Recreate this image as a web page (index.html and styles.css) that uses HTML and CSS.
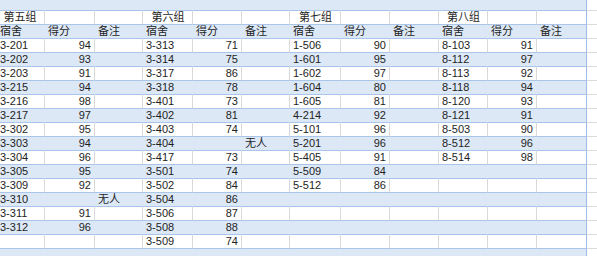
FILE: index.html
```html
<!DOCTYPE html>
<html lang="zh">
<head>
    <meta charset="UTF-8">
    <title>宿舍得分</title>
    <link rel="stylesheet" href="styles.css">
</head>
<body>
    <table class="sheet">
        <colgroup>
            <col style="width:45px"><col style="width:50px"><col style="width:48px">
            <col style="width:50px"><col style="width:49px"><col style="width:48px">
            <col style="width:51px"><col style="width:49px"><col style="width:49px">
            <col style="width:49px"><col style="width:49px"><col style="width:50px">
            <col style="width:10px">
        </colgroup>
        <tr class="band top"><td></td><td></td><td></td><td></td><td></td><td></td><td></td><td></td><td></td><td></td><td></td><td class="edge"></td><td class="out"></td></tr>
        <tr class="head">
            <td class="c">第五组</td><td></td><td></td>
            <td class="c">第六组</td><td></td><td></td>
            <td class="c">第七组</td><td></td><td></td>
            <td class="c">第八组</td><td></td><td class="edge"></td><td class="out"></td>
        </tr>
        <tr class="band">
            <td>宿舍</td><td>得分</td><td>备注</td>
            <td>宿舍</td><td>得分</td><td>备注</td>
            <td>宿舍</td><td>得分</td><td>备注</td>
            <td>宿舍</td><td>得分</td><td class="edge">备注</td><td class="out"></td>
        </tr>
        <tr>
            <td>3-201</td><td class="num">94</td><td></td>
            <td>3-313</td><td class="num">71</td><td></td>
            <td>1-506</td><td class="num">90</td><td></td>
            <td>8-103</td><td class="num">91</td><td class="edge"></td><td class="out"></td>
        </tr>
        <tr class="band">
            <td>3-202</td><td class="num">93</td><td></td>
            <td>3-314</td><td class="num">75</td><td></td>
            <td>1-601</td><td class="num">95</td><td></td>
            <td>8-112</td><td class="num">97</td><td class="edge"></td><td class="out"></td>
        </tr>
        <tr>
            <td>3-203</td><td class="num">91</td><td></td>
            <td>3-317</td><td class="num">86</td><td></td>
            <td>1-602</td><td class="num">97</td><td></td>
            <td>8-113</td><td class="num">92</td><td class="edge"></td><td class="out"></td>
        </tr>
        <tr class="band">
            <td>3-215</td><td class="num">94</td><td></td>
            <td>3-318</td><td class="num">78</td><td></td>
            <td>1-604</td><td class="num">80</td><td></td>
            <td>8-118</td><td class="num">94</td><td class="edge"></td><td class="out"></td>
        </tr>
        <tr>
            <td>3-216</td><td class="num">98</td><td></td>
            <td>3-401</td><td class="num">73</td><td></td>
            <td>1-605</td><td class="num">81</td><td></td>
            <td>8-120</td><td class="num">93</td><td class="edge"></td><td class="out"></td>
        </tr>
        <tr class="band">
            <td>3-217</td><td class="num">97</td><td></td>
            <td>3-402</td><td class="num">81</td><td></td>
            <td>4-214</td><td class="num">92</td><td></td>
            <td>8-121</td><td class="num">91</td><td class="edge"></td><td class="out"></td>
        </tr>
        <tr>
            <td>3-302</td><td class="num">95</td><td></td>
            <td>3-403</td><td class="num">74</td><td></td>
            <td>5-101</td><td class="num">96</td><td></td>
            <td>8-503</td><td class="num">90</td><td class="edge"></td><td class="out"></td>
        </tr>
        <tr class="band">
            <td>3-303</td><td class="num">94</td><td></td>
            <td>3-404</td><td></td><td>无人</td>
            <td>5-201</td><td class="num">96</td><td></td>
            <td>8-512</td><td class="num">96</td><td class="edge"></td><td class="out"></td>
        </tr>
        <tr>
            <td>3-304</td><td class="num">96</td><td></td>
            <td>3-417</td><td class="num">73</td><td></td>
            <td>5-405</td><td class="num">91</td><td></td>
            <td>8-514</td><td class="num">98</td><td class="edge"></td><td class="out"></td>
        </tr>
        <tr class="band">
            <td>3-305</td><td class="num">95</td><td></td>
            <td>3-501</td><td class="num">74</td><td></td>
            <td>5-509</td><td class="num">84</td><td></td>
            <td></td><td></td><td class="edge"></td><td class="out"></td>
        </tr>
        <tr>
            <td>3-309</td><td class="num">92</td><td></td>
            <td>3-502</td><td class="num">84</td><td></td>
            <td>5-512</td><td class="num">86</td><td></td>
            <td></td><td></td><td class="edge"></td><td class="out"></td>
        </tr>
        <tr class="band">
            <td>3-310</td><td></td><td>无人</td>
            <td>3-504</td><td class="num">86</td><td></td>
            <td></td><td></td><td></td>
            <td></td><td></td><td class="edge"></td><td class="out"></td>
        </tr>
        <tr>
            <td>3-311</td><td class="num">91</td><td></td>
            <td>3-506</td><td class="num">87</td><td></td>
            <td></td><td></td><td></td>
            <td></td><td></td><td class="edge"></td><td class="out"></td>
        </tr>
        <tr class="band">
            <td>3-312</td><td class="num">96</td><td></td>
            <td>3-508</td><td class="num">88</td><td></td>
            <td></td><td></td><td></td>
            <td></td><td></td><td class="edge"></td><td class="out"></td>
        </tr>
        <tr>
            <td></td><td></td><td></td>
            <td>3-509</td><td class="num">74</td><td></td>
            <td></td><td></td><td></td>
            <td></td><td></td><td class="edge"></td><td class="out"></td>
        </tr>
        <tr class="band bottom"><td></td><td></td><td></td><td></td><td></td><td></td><td></td><td></td><td></td><td></td><td></td><td class="edge"></td><td class="out"></td></tr>
    </table>
</body>
</html>
```

FILE: styles.css
```css
body {
    margin: 0;
    overflow: hidden;
    background-color: #fff;
    font-family: "Liberation Sans", "Noto Sans CJK SC", sans-serif;
    font-size: 11px;
    color: #1e1e1e;
}
.sheet {
    width: 597px;
    table-layout: fixed;
    border-collapse: separate;
    border-spacing: 0;
}
.sheet td {
    height: 13px;
    line-height: 13px;
    padding: 0 2px 0 3px;
    white-space: nowrap;
    overflow: hidden;
    border-bottom: 1px solid #a9c5e9;
    border-right: 1px solid #d9d9d9;
}
.sheet tr td:first-child {
    padding-left: 0;
}
.sheet .band td {
    background-color: #dde8f6;
    border-right-color: #dde8f6;
}
.sheet .top td {
    height: 10px;
}
.sheet .bottom td {
    height: 10px;
    border-bottom: none;
}
.sheet td.c {
    text-align: center;
}
.sheet tr td.c:first-child {
    padding-right: 4px;
}
.sheet td.num {
    text-align: right;
    padding-right: 3px;
}
.sheet td.edge,
.sheet .band td.edge {
    border-right: 1px solid #9dbde4;
}
.sheet td.out,
.sheet .band td.out {
    padding: 0;
    background-color: #fff;
    border-bottom-color: #dcdcdc;
    border-right: none;
}
```
